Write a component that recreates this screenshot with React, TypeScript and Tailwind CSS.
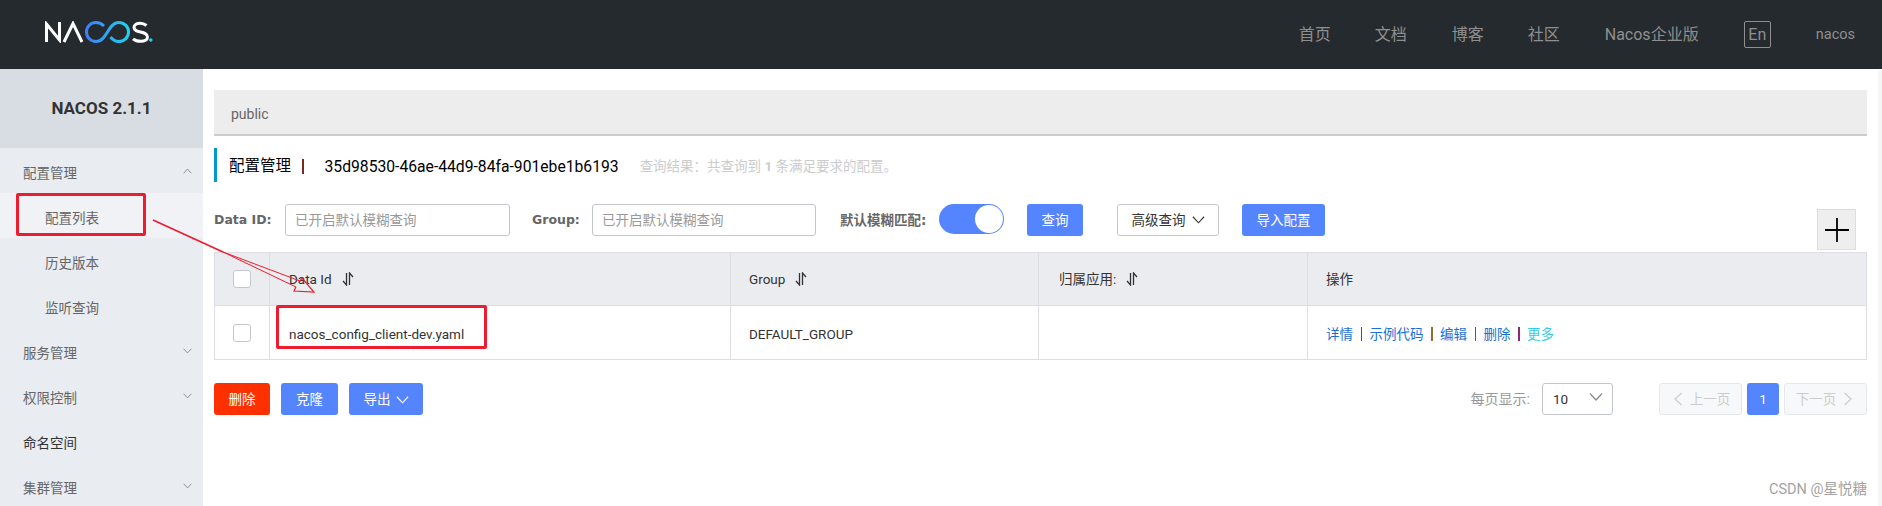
import { ReactNode } from 'react';

function Chev({ className = '', up = false }: { className?: string; up?: boolean }) {
    return (
        <svg viewBox="0 0 14 8" fill="none" stroke="currentColor" strokeWidth="1.2" className={className}>
            <path d={up ? 'M1 7.5 7 1l6 6.5' : 'M1 .5 7 7l6-6.5'} />
        </svg>
    );
}

function SortIcon() {
    return (
        <svg viewBox="0 0 12 14" fill="none" stroke="currentColor" strokeWidth="1.3" className="w-[12px] h-[14px] ml-[10px] text-[#333]">
            <path d="M4.500 1v12L1 9" />
            <path d="M7.500 13V1l3.500 4" />
        </svg>
    );
}

function Logo() {
    return (
        <svg viewBox="0 0 108 22" className="w-[108px] h-[22px]" fill="none">
            <defs>
                <linearGradient id="inf" x1="0" x2="1" y1="0" y2="0">
                    <stop offset="0" stopColor="#3f7ff5" />
                    <stop offset="1" stopColor="#1fd2f2" />
                </linearGradient>
            </defs>
            <path d="M1.500 21V3l13 16V1" stroke="#fff" strokeWidth="3" />
            <path d="M19 21 28 2.500 37 21" stroke="#fff" strokeWidth="3" />
            <path
                d="M59 5C56.500 2.500 54 1.500 51 1.500 45.500 1.500 41.500 5.500 41.500 11S45.500 20.500 51 20.500C57 20.500 60 15 62.500 11S68 1.500 73.500 1.500C79 1.500 83.500 5.500 83.500 11S79 20.500 73.500 20.500C70 20.500 67.500 18.500 65.500 16"
                stroke="url(#inf)"
                strokeWidth="3"
            />
            <path d="M101.500 4.500C99.500 2.800 97.500 2.200 95 2.200c-3 0-6 1.500-6 4.300 0 6 13.500 3 13.500 9.500 0 2.800-3 4.300-6.500 4.300-2.500 0-6-.8-8-2.500" stroke="#fff" strokeWidth="3" />
            <circle cx="105.800" cy="19" r="1.800" fill="#1fd2f2" />
        </svg>
    );
}

function MenuItem({ label, sub, active, open, plain }: { label: string; sub?: boolean; active?: boolean; open?: boolean; plain?: boolean }) {
    return (
        <div
            className={`h-[45px] flex items-center justify-between pt-[5px] pr-[11px] text-[13.500px] ${sub ? 'pl-[45px]' : 'pl-[23px]'} ${active ? 'bg-[#f0f2f6]' : ''} ${plain ? 'text-[#333]' : 'text-[#666]'}`}
        >
            <span>{label}</span>
            {!sub && !plain && <Chev up={open} className="w-[9px] h-[6px] text-[#777] mb-[4px]" />}
        </div>
    );
}

function Label({ children, className }: { children: ReactNode; className: string }) {
    return (
        <div className={`h-[32px] flex items-center font-bold text-[12.500px] text-[#666] whitespace-nowrap font-['DejaVu_Sans','Noto_Sans_CJK_SC',sans-serif] ${className}`}>
            {children}
        </div>
    );
}

function SearchInput({ className }: { className: string }) {
    return (
        <div className={`h-[32px] border border-[#c4c6cf] rounded-[3px] flex items-center pl-[9px] pt-[1px] text-[13.500px] text-[#999] ${className}`}>
            已开启默认模糊查询
        </div>
    );
}

function Btn({ children, className }: { children: ReactNode; className: string }) {
    return <div className={`h-[32px] rounded-[3px] flex items-center justify-center pt-[1px] text-[13.500px] text-white ${className}`}>{children}</div>;
}

function Sep({ color }: { color: string }) {
    return <span className={`w-[1.500px] h-[14px] mx-[7.500px] ${color}`} />;
}

export default function App() {
    return (
        <div className="relative w-[1882px] h-[506px] overflow-hidden bg-white font-['Roboto','Noto_Sans_CJK_SC',sans-serif]">
            <header className="h-[69px] bg-[#252a2e] flex items-center text-[#8f8f8f]">
                <div className="ml-[45px] mb-[6px]">
                    <Logo />
                </div>
                <nav className="ml-auto flex items-center text-[16px] mr-[27px]">
                    <span className="w-[32px] mr-[44px]">首页</span>
                    <span className="w-[32px] mr-[45px]">文档</span>
                    <span className="w-[32px] mr-[44px]">博客</span>
                    <span className="w-[32px] mr-[45px]">社区</span>
                    <span className="w-[94px] mr-[45px] whitespace-nowrap">Nacos企业版</span>
                    <span className="w-[27px] h-[27px] mr-[45px] border border-[#8f8f8f] rounded-[2px] flex items-center justify-center text-[16px]">En</span>
                    <span className="text-[14.500px]">nacos</span>
                </nav>
            </header>

            <div className="flex h-[437px]">
                <aside className="w-[203px] shrink-0 bg-[#e9ecf1] overflow-hidden">
                    <div className="h-[79px] bg-[#d8dce3] flex items-center justify-center font-bold text-[17px] text-[#333]">NACOS 2.1.1</div>
                    <MenuItem label="配置管理" open />
                    <MenuItem label="配置列表" sub active />
                    <MenuItem label="历史版本" sub />
                    <MenuItem label="监听查询" sub />
                    <MenuItem label="服务管理" />
                    <MenuItem label="权限控制" />
                    <MenuItem label="命名空间" plain />
                    <MenuItem label="集群管理" />
                </aside>

                <main className="flex-1 pl-[11px] pr-[15px] pt-[21px]">
                    <div className="h-[46px] bg-[#ededed] border-b-2 border-[#ccc] flex items-center pl-[17px] pt-[4px] text-[14px] text-[#666]">public</div>

                    <div className="mt-[12px] h-[34px] border-l-[3px] border-[#0099cc] flex items-center pl-[12px] pt-[3px]">
                        <span className="text-[15.500px] text-black">配置管理</span>
                        <span className="w-[1.500px] h-[15px] bg-[#7a2a1c] ml-[11px]" />
                        <span className="text-[15.700px] text-black ml-[21px]">35d98530-46ae-44d9-84fa-901ebe1b6193</span>
                        <span className="text-[13.500px] text-[#ccc] ml-[21px]">查询结果：共查询到 <b>1</b> 条满足要求的配置。</span>
                    </div>

                    <div className="mt-[22px] h-[48px] flex items-start">
                        <Label className="w-[57px]">Data ID:</Label>
                        <SearchInput className="w-[225px] ml-[14px]" />
                        <Label className="w-[47px] ml-[22px]">Group:</Label>
                        <SearchInput className="w-[224px] ml-[13px]" />
                        <Label className="w-[86px] ml-[24px] text-[13.500px]">默认模糊匹配:</Label>
                        <div className="w-[65px] h-[30px] ml-[13px] rounded-full bg-[#5584ff] flex items-center justify-end pr-[1px]">
                            <div className="w-[28px] h-[28px] rounded-full bg-white" />
                        </div>
                        <Btn className="w-[56px] ml-[23px] bg-[#5584ff]">查询</Btn>
                        <div className="w-[102px] h-[32px] ml-[34px] border border-[#c4c6cf] rounded-[3px] flex items-center justify-center gap-[6px] text-[13.500px] text-[#333]">
                            高级查询
                            <Chev className="w-[13px] h-[8px]" />
                        </div>
                        <Btn className="w-[83px] ml-[23px] bg-[#5584ff]">导入配置</Btn>
                        <div className="w-[39px] h-[41px] self-end mb-[2px] ml-auto mr-[11px] bg-[#eee] border border-[#ddd] flex items-center justify-center">
                            <svg viewBox="0 0 24 24" className="w-[24px] h-[24px]" stroke="#000" strokeWidth="1.800">
                                <path d="M0 12h24M12 0v24" />
                            </svg>
                        </div>
                    </div>

                    <div className="border border-[#dcdee3] text-[13.500px] text-[#333]">
                        <div className="flex h-[53px] bg-[#ebecf0] border-b border-[#dcdee3]">
                            <div className="w-[55px] shrink-0 border-r border-[#dcdee3] flex items-center justify-center">
                                <div className="w-[18px] h-[18px] bg-white border border-[#c4c6cf] rounded-[3px]" />
                            </div>
                            <div className="w-[461px] shrink-0 border-r border-[#dcdee3] flex items-center pl-[19px]">
                                Data Id
                                <SortIcon />
                            </div>
                            <div className="w-[308px] shrink-0 border-r border-[#dcdee3] flex items-center pl-[18px]">
                                Group
                                <SortIcon />
                            </div>
                            <div className="w-[269px] shrink-0 border-r border-[#dcdee3] flex items-center pl-[20px]">
                                归属应用:
                                <SortIcon />
                            </div>
                            <div className="flex-1 flex items-center pl-[18px]">操作</div>
                        </div>
                        <div className="flex h-[53px]">
                            <div className="w-[55px] shrink-0 border-r border-[#dcdee3] flex items-center justify-center">
                                <div className="w-[18px] h-[18px] bg-white border border-[#c4c6cf] rounded-[3px]" />
                            </div>
                            <div className="w-[461px] shrink-0 border-r border-[#dcdee3] flex items-center pl-[19px] pt-[3px]">nacos_config_client-dev.yaml</div>
                            <div className="w-[308px] shrink-0 border-r border-[#dcdee3] flex items-center pl-[18px] pt-[3px]">DEFAULT_GROUP</div>
                            <div className="w-[269px] shrink-0 border-r border-[#dcdee3]" />
                            <div className="flex-1 flex items-center pl-[18px] pt-[3px] text-[#1a6fd8]">
                                详情
                                <Sep color="bg-[#1a5f8f]" />
                                示例代码
                                <Sep color="bg-[#9a6a35]" />
                                编辑
                                <Sep color="bg-[#2a6a8a]" />
                                删除
                                <Sep color="bg-[#8a2a6a]" />
                                <span className="text-[#33cde5]">更多</span>
                            </div>
                        </div>
                    </div>

                    <div className="mt-[23px] flex items-center">
                        <Btn className="w-[56px] bg-[#ff3000]">删除</Btn>
                        <Btn className="w-[57px] ml-[11px] bg-[#5584ff]">克隆</Btn>
                        <Btn className="w-[74px] ml-[11px] bg-[#5584ff] gap-[5px]">
                            导出
                            <Chev className="w-[13px] h-[8px]" />
                        </Btn>
                        <span className="ml-auto text-[14px] text-[#999]">每页显示:</span>
                        <div className="w-[71px] h-[32px] ml-[12px] border border-[#c4c6cf] rounded-[3px] flex items-center justify-between pl-[10px] pr-[9px] text-[13.500px] text-[#333]">
                            10
                            <Chev className="w-[14px] h-[8px] text-[#888] mb-[4px]" />
                        </div>
                        <div className="w-[83px] h-[32px] ml-[46px] bg-[#f7f8fa] border border-[#e6e7eb] rounded-[3px] flex items-center justify-center gap-[5px] text-[13.500px] text-[#ccc]">
                            <Chev up className="w-[14px] h-[8px] -rotate-90" />
                            上一页
                        </div>
                        <Btn className="w-[32px] ml-[5px] bg-[#5584ff]">1</Btn>
                        <div className="w-[83px] h-[32px] ml-[5px] bg-[#f7f8fa] border border-[#e6e7eb] rounded-[3px] flex items-center justify-center gap-[5px] text-[13.500px] text-[#ccc]">
                            下一页
                            <Chev up className="w-[14px] h-[8px] rotate-90" />
                        </div>
                    </div>
                </main>
            </div>

            {/* page scrollbar strip */}
            <div className="absolute right-0 top-[70px] bottom-0 w-[4px] bg-[#f6f6f6]" />

            {/* red annotations from the screenshot */}
            <div className="absolute left-[16px] top-[193px] w-[130px] h-[43px] border-[3px] border-[#ee1c2e] rounded-[2px]" />
            <div className="absolute left-[276px] top-[305px] w-[211px] h-[44px] border-[3px] border-[#ee1c2e] rounded-[2px]" />
            <svg className="absolute left-0 top-0 w-[1882px] h-[506px] pointer-events-none" fill="none" stroke="#ee1c2e">
                <path d="M153 220 223 252" strokeWidth="1.800" />
                <path d="M223 252 296 287M223 252 300 281" strokeWidth="1" />
                <path d="M296 287 294 291 314 292 302 278 300 281" strokeWidth="1.200" />
            </svg>

            <div className="absolute right-[15px] top-[479px] text-[14.500px] text-[#a3a3a3]">CSDN @星悦糖</div>
        </div>
    );
}
